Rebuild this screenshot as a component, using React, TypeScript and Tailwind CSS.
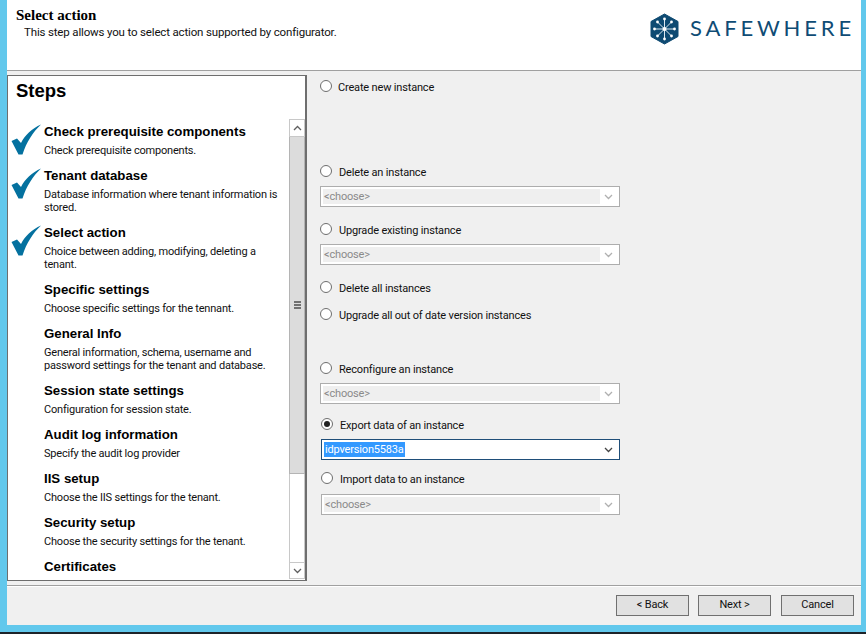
import React from 'react';

const steps = [
  { title: 'Check prerequisite components', desc: ['Check prerequisite components.'], done: true, h: 44 },
  { title: 'Tenant database', desc: ['Database information where tenant information is', 'stored.'], done: true, h: 57 },
  { title: 'Select action', desc: ['Choice between adding, modifying, deleting a', 'tenant.'], done: true, h: 57 },
  { title: 'Specific settings', desc: ['Choose specific settings for the tennant.'], done: false, h: 44 },
  { title: 'General Info', desc: ['General information, schema, username and', 'password settings for the tenant and database.'], done: false, h: 57 },
  { title: 'Session state settings', desc: ['Configuration for session state.'], done: false, h: 44 },
  { title: 'Audit log information', desc: ['Specify the audit log provider'], done: false, h: 44 },
  { title: 'IIS setup', desc: ['Choose the IIS settings for the tenant.'], done: false, h: 44 },
  { title: 'Security setup', desc: ['Choose the security settings for the tenant.'], done: false, h: 44 },
  { title: 'Certificates', desc: [], done: false, h: 20 },
];

const Check = () => (
  <svg width="32" height="32" viewBox="0 0 32 32" className="shrink-0">
    <path d="M0.5 17 L6 14.5 L10 19 C14 11 21 4.5 30 0.5 C22 8 15.5 18 11.5 30.5 L7.5 30.5 Z" fill="#04719f" />
  </svg>
);

const Chevron = ({ up = false, color = '#606060' }: { up?: boolean; color?: string }) => (
  <svg width="9" height="6" viewBox="0 0 9 6">
    <path d={up ? 'M1 5 L4.5 1.5 L8 5' : 'M1 1 L4.5 4.5 L8 1'} fill="none" stroke={color} strokeWidth="1.3" />
  </svg>
);

const Radio = ({ label, checked = false, className = '' }: { label: string; checked?: boolean; className?: string }) => (
  <div className={`flex items-center h-[14px] ${className}`}>
    <div className="w-[12px] h-[12px] rounded-full border border-[#6e6e6e] bg-white flex items-center justify-center shrink-0">
      {checked && <div className="w-[6px] h-[6px] rounded-full bg-[#222]" />}
    </div>
    <span className="ml-[7px] pt-[4px] font-['Roboto',sans-serif] text-[11px] tracking-[-0.17px] text-[#111] whitespace-nowrap">{label}</span>
  </div>
);

const Choose = ({ className = '' }: { className?: string }) => (
  <div className={`h-[21px] border border-[#adadad] bg-white flex items-center p-[2px] ${className}`}>
    <div className="w-[277px] h-[15px] bg-[#efefef] font-['Roboto',sans-serif] text-[11px] tracking-[-0.17px] leading-[15px] text-[#8a8a8a] pl-[1px]">&lt;choose&gt;</div>
    <div className="flex-1 flex justify-center"><Chevron color="#b0b0b0" /></div>
  </div>
);

const Btn = ({ label, className = '' }: { label: string; className?: string }) => (
  <button className={`w-[73px] h-[21px] bg-[#e1e1e1] border border-[#707070] font-['Roboto',sans-serif] text-[11px] tracking-[-0.17px] text-[#111] ${className}`}>{label}</button>
);

const Logo = () => (
  <svg width="29" height="32" viewBox="0 0 29 32" className="shrink-0">
    <path d="M14.5 1 L28 8.5 L28 23.5 L14.5 31 L1 23.5 L1 8.5 Z" fill="#0e4a72" stroke="#0e4a72" strokeLinejoin="round" />
    <g stroke="#dbe8f0" strokeWidth="1">
      <path d="M14.5 6 L14.5 26" />
      <path d="M4.5 16 L24.5 16" />
      <path d="M7.5 9 L21.5 23" />
      <path d="M21.5 9 L7.5 23" />
    </g>
    <g fill="#ffffff">
      <circle cx="14.5" cy="6" r="1.4" />
      <circle cx="14.5" cy="26" r="1.4" />
      <circle cx="4.5" cy="16" r="1.4" />
      <circle cx="24.5" cy="16" r="1.4" />
      <circle cx="7.5" cy="9" r="1.4" />
      <circle cx="21.5" cy="9" r="1.4" />
      <circle cx="7.5" cy="23" r="1.4" />
      <circle cx="21.5" cy="23" r="1.4" />
      <circle cx="14.5" cy="16" r="2" />
    </g>
  </svg>
);

export default function App() {
  return (
    <div className="w-[866px] h-[634px] flex flex-col bg-[#62c8ec] font-['Liberation_Sans',sans-serif] overflow-hidden">
      <div className="h-[625px] ml-[7px] mr-[5px] bg-[#f0f0f0] flex flex-col">
        {/* Header */}
        <div className="h-[71px] shrink-0 bg-white border-b border-[#a0a0a0] flex justify-between pl-[9px] pr-[6px]">
          <div className="pt-[7px]">
            <div className="font-['Liberation_Serif',serif] font-bold text-[15px] leading-[16px] text-black">Select action</div>
            <div className="pl-[8px] font-['Roboto',sans-serif] text-[11.5px] tracking-[-0.16px] leading-[14px] mt-[2px] text-[#111]">This step allows you to select action supported by configurator.</div>
          </div>
          <div className="flex items-start pt-[13px]">
            <Logo />
            <span className="ml-[11px] font-['Lato',sans-serif] text-[22px] leading-[30px] tracking-[3.85px] text-[#0f4c75]">SAFEWHERE</span>
          </div>
        </div>

        {/* Body */}
        <div className="h-[515px] flex border-b border-[#a0a0a0] shadow-[0_1px_0_#ffffff]">
          <div className="w-[300px] h-[506px] mt-[4px] shrink-0 bg-white border border-[#6e6e6e] border-r-2 flex flex-col">
            <div className="h-[44px] shrink-0 pl-[8px] pt-[3px] text-[18.5px] leading-[24px] font-bold text-black">Steps</div>
            <div className="flex-1 flex min-h-0">
              <div className="flex-1 overflow-hidden pt-[4px]">
                {steps.map((s) => (
                  <div key={s.title} className="flex" style={{ height: s.h }}>
                    <div className="w-[36px] pl-[3px] shrink-0">{s.done && <Check />}</div>
                    <div>
                      <div className="text-[13.25px] leading-[16px] font-bold text-black whitespace-nowrap">{s.title}</div>
                      <div className="mt-[4px] font-['Roboto',sans-serif] text-[11px] tracking-[-0.2px] leading-[13px] text-[#111] whitespace-nowrap">
                        {s.desc.map((d) => (<div key={d}>{d}</div>))}
                      </div>
                    </div>
                  </div>
                ))}
              </div>
              <div className="w-[16px] shrink-0 flex flex-col bg-white -mt-[1px] mb-[1px]">
                <div className="h-[18px] bg-white border border-[#c8c8c8] flex items-center justify-center"><Chevron up /></div>
                <div className="h-[337px] bg-[#dcdcdc] border-x border-b border-[#b4b4b4] flex items-center justify-center">
                  <div className="w-[7px] h-[8px] flex flex-col justify-between">
                    <div className="h-[2px] bg-[#707070]" />
                    <div className="h-[2px] bg-[#707070]" />
                    <div className="h-[2px] bg-[#707070]" />
                  </div>
                </div>
                <div className="flex-1 bg-white border-x border-[#c8c8c8]" />
                <div className="h-[17px] bg-white border border-[#c8c8c8] flex items-center justify-center"><Chevron /></div>
              </div>
            </div>
          </div>

          <div className="flex-1 pl-[6px] pt-[8px]">
            <Radio label="Create new instance" className="ml-[7px] [&>span]:ml-[6px]" />
            <Radio label="Delete an instance" className="ml-[7px] mt-[71px]" />
            <Choose className="ml-[7px] w-[300px] mt-[8px]" />
            <Radio label="Upgrade existing instance" className="ml-[7px] mt-[15px]" />
            <Choose className="ml-[7px] w-[300px] mt-[8px]" />
            <Radio label="Delete all instances" className="ml-[7px] mt-[15px]" />
            <Radio label="Upgrade all out of date version instances" className="ml-[7px] mt-[13px]" />
            <Radio label="Reconfigure an instance" className="ml-[7px] mt-[40px]" />
            <Choose className="ml-[7px] w-[300px] mt-[8px]" />
            <Radio label="Export data of an instance" checked className="ml-[8px] mt-[13px]" />
            <div className="ml-[8px] mt-[8px] w-[299px] h-[21px] border border-[#1f4e79] bg-white flex items-center p-[2px]">
              <div className="w-[276px] h-[15px] font-['Roboto',sans-serif] text-[11px] tracking-[-0.17px] leading-[15px] text-white"><span className="bg-[#3399ff] inline-block pr-[1px] pl-[1px]">idpversion5583a</span></div>
              <div className="flex-1 flex justify-center"><Chevron color="#444" /></div>
            </div>
            <Radio label="Import data to an instance" className="ml-[8px] mt-[11px]" />
            <Choose className="ml-[8px] w-[299px] mt-[9px] [&>div:first-child]:w-[276px]" />
          </div>
        </div>

        {/* Footer */}
        <div className="flex-1 flex justify-end items-start pt-[9px] pr-[7px] gap-[9px]">
          <Btn label="< Back" />
          <Btn label="Next >" />
          <Btn label="Cancel" className="ml-[1px]" />
        </div>
      </div>
      <div className="h-[7px] shrink-0" />
      <div className="flex-1 bg-[#1d2329]" />
    </div>
  );
}
